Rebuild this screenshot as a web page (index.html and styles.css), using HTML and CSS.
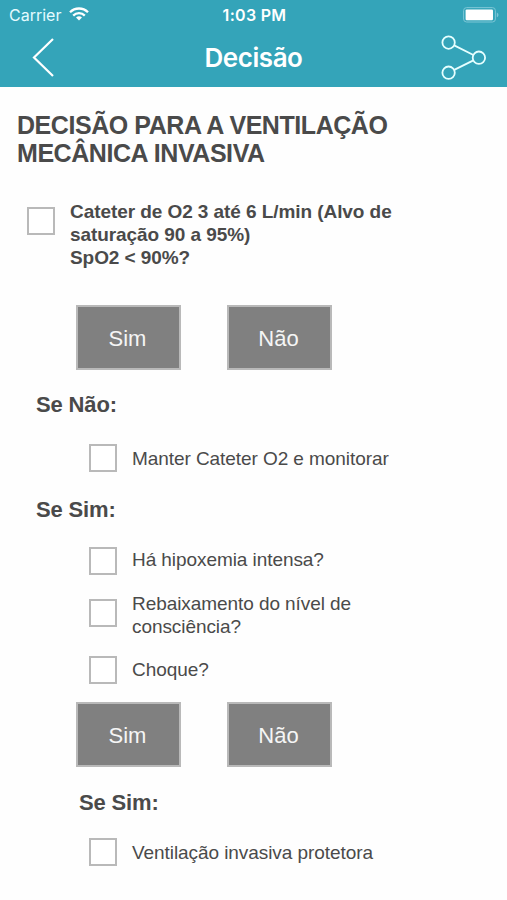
FILE: index.html
```html
<!DOCTYPE html>
<html lang="pt-BR">
<head>
<meta charset="utf-8">
<title>Decisão</title>
<link rel="stylesheet" href="styles.css">
</head>
<body>
<header class="topbar">
  <div class="status">
    <div class="status-left">
      <span class="carrier">Carrier</span>
      <svg class="wifi" width="20" height="14" viewBox="0 0 20 14">
        <g fill="none" stroke="#fff" stroke-width="2.3">
          <path d="M1 5.2a12.8 12.8 0 0 1 18 0"/>
          <path d="M4.2 8.6a8.2 8.2 0 0 1 11.6 0"/>
        </g>
        <path d="M10 13.6l-3-3a4.3 4.3 0 0 1 6 0z" fill="#fff"/>
      </svg>
    </div>
    <span class="clock">1:03 PM</span>
    <svg class="battery" width="37" height="16" viewBox="0 0 37 16">
      <rect x=".6" y=".6" width="31.8" height="14.4" rx="3" fill="none" stroke="#7cc6d6" stroke-width="1"/>
      <rect x="2.6" y="2.4" width="27.4" height="10.8" rx="1.2" fill="#fff"/>
      <path d="M33.8 5.4c2.2.8 2.2 4 0 4.8z" fill="#7cc6d6"/>
    </svg>
  </div>
  <nav class="nav">
    <svg class="back" width="24" height="40" viewBox="0 0 24 40">
      <path d="M22 1L3 19.5l19 18.5" fill="none" stroke="#fff" stroke-width="2.2"/>
    </svg>
    <h1 class="nav-title">Decisão</h1>
    <svg class="share" width="46" height="46" viewBox="0 0 46 46">
      <g fill="none" stroke="#e6ffff" stroke-width="1.8">
        <circle cx="7.6" cy="7.6" r="6.2"/>
        <circle cx="7.6" cy="37.7" r="6.2"/>
        <circle cx="37.9" cy="22.7" r="6.2"/>
        <path d="M13.2 10.4L32.4 20M13.2 34.9l19.2-9.5"/>
      </g>
    </svg>
  </nav>
</header>
<main class="content">
  <h2 class="title">DECISÃO PARA A VENTILAÇÃO<br>MECÂNICA INVASIVA</h2>
  <div class="item lead">
    <span class="box"></span>
    <p class="label">Cateter de O2 3 até 6 L/min (Alvo de<br>saturação 90 a 95%)<br>SpO2 &lt; 90%?</p>
  </div>
  <div class="buttons first">
    <button class="btn">Sim</button>
    <button class="btn">Não</button>
  </div>
  <h3 class="branch no">Se Não:</h3>
  <div class="item monitor">
    <span class="box"></span>
    <p class="label">Manter Cateter O2 e monitorar</p>
  </div>
  <h3 class="branch yes">Se Sim:</h3>
  <div class="item hypoxemia">
    <span class="box"></span>
    <p class="label">Há hipoxemia intensa?</p>
  </div>
  <div class="item consciousness">
    <span class="box"></span>
    <p class="label">Rebaixamento do nível de<br>consciência?</p>
  </div>
  <div class="item shock">
    <span class="box"></span>
    <p class="label">Choque?</p>
  </div>
  <div class="buttons second">
    <button class="btn">Sim</button>
    <button class="btn">Não</button>
  </div>
  <h3 class="branch nested">Se Sim:</h3>
  <div class="item ventilation">
    <span class="box"></span>
    <p class="label">Ventilação invasiva protetora</p>
  </div>
</main>
</body>
</html>
```
FILE: styles.css
```css
* { box-sizing: border-box; margin: 0; padding: 0; }
body {
  height: 900px;
  overflow: hidden;
  background: #fefefe;
  color: #4a4a4a;
  font-family: "Liberation Sans", Arial, sans-serif;
  white-space: nowrap;
}
.topbar {
  height: 87px;
  background: #34a4b9;
  color: #fff;
  font-family: Inter, sans-serif;
}
.status {
  display: grid;
  grid-template-columns: 1fr auto 1fr;
  align-items: center;
  height: 30px;
  padding: 0 7px 0 9px;
}
.status-left { display: flex; align-items: center; gap: 8px; }
.carrier { font-size: 16px; line-height: 20px; color: #e4fbff; }
.wifi { margin-top: -2px; }
.clock { font-size: 16px; line-height: 20px; font-weight: 600; letter-spacing: 0.3px; }
.battery { justify-self: end; }
.nav {
  display: grid;
  grid-template-columns: 1fr auto 1fr;
  align-items: center;
  height: 56px;
  padding: 0 20px 0 31px;
}
.nav-title { margin-right: 11px; font-size: 26px; line-height: 32px; font-weight: 600; letter-spacing: -0.45px; }
.share { justify-self: end; }
.content { display: flow-root; }
.title { margin: 24px 0 0 17px; font-size: 25px; line-height: 28px; letter-spacing: -0.44px; }
.item { display: flex; align-items: flex-start; gap: 15px; margin-left: 89px; }
.box { flex: none; width: 28px; height: 28px; border: 2px solid #b9b9b9; background: #fff; }
.label { font-size: 19px; line-height: 23px; letter-spacing: -0.07px; }
.lead { margin: 33px 0 0 27px; }
.lead .box { margin-top: 7px; }
.lead .label { font-weight: 700; }
.buttons { display: flex; gap: 46px; margin-left: 76px; }
.first { margin-top: 36px; }
.second { margin-top: 18px; }
.btn {
  width: 105px;
  height: 65px;
  padding: 2px 2px 0 0;
  border: 2px solid #b9b9b9;
  background: #808080;
  color: #f5f5f5;
  font: 22px/26px "Liberation Sans", Arial, sans-serif;
}
.branch { margin-left: 36px; font-size: 22px; line-height: 26px; letter-spacing: -0.15px; }
.no { margin-top: 22px; }
.yes { margin-top: 25px; }
.nested { margin: 23px 0 0 79px; }
.monitor { margin-top: 26px; }
.monitor .label { margin-top: 3px; }
.hypoxemia { margin-top: 24px; }
.hypoxemia .label { margin-top: 1px; }
.consciousness { margin-top: 17px; }
.consciousness .box { margin-top: 7px; }
.shock { margin-top: 18px; }
.shock .label { margin-top: 2px; }
.ventilation { margin-top: 22px; }
.ventilation .label { margin-top: 3px; }
```
